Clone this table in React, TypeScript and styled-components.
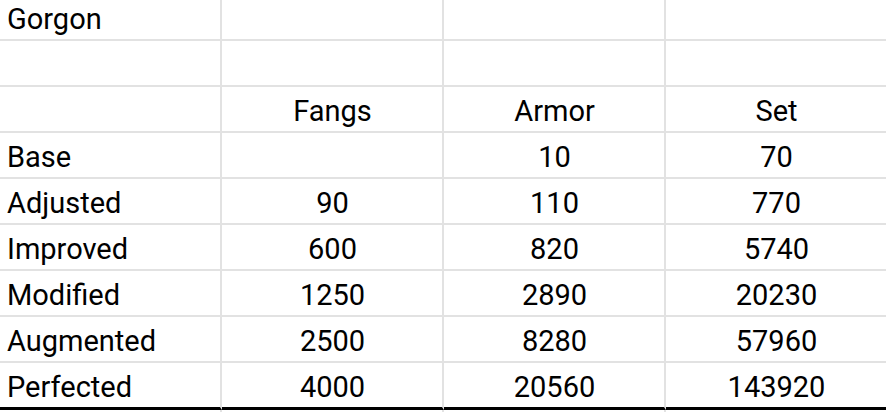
import React from "react";
import styled, { createGlobalStyle } from "styled-components";

const Global = createGlobalStyle`
  html, body { margin: 0; padding: 0; background: #ffffff; }
  body { font-family: Roboto, "Liberation Sans", Arial, sans-serif; overflow: hidden; }
`;

const Sheet = styled.div`
  width: 886px;
  height: 412px;
  overflow: hidden;
  background: #ffffff;
`;

const Grid = styled.div`
  display: grid;
  grid-template-columns: repeat(4, 222px);
  grid-template-rows: 41px repeat(7, 46px) 47px 6px;
`;

const Cell = styled.div<{ $align?: "left" | "center"; $last?: boolean }>`
  box-sizing: border-box;
  display: flex;
  align-items: flex-end;
  justify-content: ${(p) => (p.$align === "center" ? "center" : "flex-start")};
  padding: 0 6px 3px 7px;
  border-right: 2px solid #e2e2e2;
  border-bottom: ${(p) => (p.$last ? "3px solid #000000" : "2px solid #e2e2e2")};
  font-size: 29px;
  line-height: 34px;
  color: #000000;
  white-space: nowrap;
`;

const Tail = styled.div`
  box-sizing: border-box;
  border-right: 2px solid #e2e2e2;
`;

const rows: [string, string, string, string][] = [
  ["Gorgon", "", "", ""],
  ["", "", "", ""],
  ["", "Fangs", "Armor", "Set"],
  ["Base", "", "10", "70"],
  ["Adjusted", "90", "110", "770"],
  ["Improved", "600", "820", "5740"],
  ["Modified", "1250", "2890", "20230"],
  ["Augmented", "2500", "8280", "57960"],
  ["Perfected", "4000", "20560", "143920"],
];

export default function App() {
  return (
    <Sheet>
      <Global />
      <Grid>
        {rows.map((r, ri) =>
          r.map((v, ci) => (
            <Cell
              key={`${ri}-${ci}`}
              $align={ci === 0 ? "left" : "center"}
              $last={ri === rows.length - 1}
            >
              {v}
            </Cell>
          ))
        )}
        {[0, 1, 2, 3].map((i) => (
          <Tail key={`t${i}`} />
        ))}
      </Grid>
    </Sheet>
  );
}
